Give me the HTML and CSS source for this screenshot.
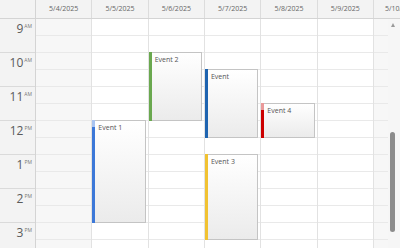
FILE: index.html
```html
<!DOCTYPE html>
<html lang="en">
<head>
    <meta charset="UTF-8">
    <title>Week Calendar</title>
    <link rel="stylesheet" href="styles.css">
</head>
<body>

    <div class="scheduler">
        <!-- column headers -->
        <div class="sched-header">
            <div class="corner"></div>
            <div class="col-headers">
                <div class="col-header">5/4/2025</div>
                <div class="col-header">5/5/2025</div>
                <div class="col-header">5/6/2025</div>
                <div class="col-header">5/7/2025</div>
                <div class="col-header">5/8/2025</div>
                <div class="col-header">5/9/2025</div>
                <div class="col-header">5/10/2025</div>
            </div>
        </div>

        <div class="sched-body">
            <!-- hours -->
            <div class="time-col">
                <div class="hour"><span class="hour-num">9</span><span class="ampm">AM</span></div>
                <div class="hour"><span class="hour-num">10</span><span class="ampm">AM</span></div>
                <div class="hour"><span class="hour-num">11</span><span class="ampm">AM</span></div>
                <div class="hour"><span class="hour-num">12</span><span class="ampm">PM</span></div>
                <div class="hour"><span class="hour-num">1</span><span class="ampm">PM</span></div>
                <div class="hour"><span class="hour-num">2</span><span class="ampm">PM</span></div>
                <div class="hour"><span class="hour-num">3</span><span class="ampm">PM</span></div>
            </div>

            <!-- day columns, events are placed by start hour (34px per hour) -->
            <div class="days">
                <div class="day weekend"></div>
                <div class="day">
                    <div class="event" style="top: 101px; height: 103px;">
                        <div class="bar bar-blue"><div class="bar-fill" style="top: 7px;"></div></div>
                        <div class="event-text">Event 1</div>
                    </div>
                </div>
                <div class="day">
                    <div class="event" style="top: 33px; height: 69px;">
                        <div class="bar bar-green"><div class="bar-fill" style="top: 0;"></div></div>
                        <div class="event-text">Event 2</div>
                    </div>
                </div>
                <div class="day">
                    <div class="event" style="top: 50px; height: 69px;">
                        <div class="bar bar-navy"><div class="bar-fill" style="top: 0;"></div></div>
                        <div class="event-text">Event</div>
                    </div>
                    <div class="event" style="top: 135px; height: 86px;">
                        <div class="bar bar-yellow"><div class="bar-fill" style="top: 0;"></div></div>
                        <div class="event-text">Event 3</div>
                    </div>
                </div>
                <div class="day">
                    <div class="event" style="top: 84px; height: 35px;">
                        <div class="bar bar-red"><div class="bar-fill" style="top: 7px;"></div></div>
                        <div class="event-text">Event 4</div>
                    </div>
                </div>
                <div class="day"></div>
                <div class="day weekend"></div>
            </div>

            <div class="scrollbar">
                <div class="scroll-arrow"></div>
                <div class="scroll-thumb"></div>
            </div>
        </div>
    </div>

</body>
</html>
```

FILE: styles.css
```css
/* General Page Styles */
body {
    margin: 0;
    padding: 0;
    background-color: #ffffff;
    font-family: "Open Sans", "Liberation Sans", sans-serif;
    color: #555;
}

.scheduler {
    width: 400px;
    height: 248px;
    overflow: hidden;
}

/* Header */
.sched-header {
    display: flex;
    height: 19px;
    background-color: #f3f3f3;
    border-bottom: 1px solid #d4d4d4;
    box-sizing: border-box;
}

.corner {
    flex: 0 0 36px;
    border-right: 1px solid #d4d4d4;
    box-sizing: border-box;
}

.col-headers {
    display: flex;
    flex: 1;
    overflow: hidden;
}

.col-header {
    flex: 0 0 56.33px;
    border-right: 1px solid #dcdcdc;
    box-sizing: border-box;
    font-size: 7px;
    line-height: 18px;
    text-align: center;
    color: #666;
    white-space: nowrap;
}

/* Body */
.sched-body {
    display: flex;
    height: 229px;
    overflow: hidden;
}

.time-col {
    flex: 0 0 36px;
    background-color: #f3f3f3;
    border-right: 1px solid #d4d4d4;
    box-sizing: border-box;
}

.hour {
    height: 34px;
    border-bottom: 1px solid #dadada;
    box-sizing: border-box;
    display: flex;
    justify-content: flex-end;
    align-items: flex-start;
    padding: 3px 3px 0 0;
}

.hour-num {
    font-size: 12px;
    line-height: 14px;
    color: #5a5a5a;
}

.ampm {
    font-size: 5px;
    line-height: 8px;
    margin-left: 1px;
    color: #777;
}

.days {
    display: flex;
    flex: 0 0 352px;
    overflow: hidden;
}

.day {
    position: relative;
    flex: 0 0 56.33px;
    border-right: 1px solid #e2e2e2;
    box-sizing: border-box;
    background: repeating-linear-gradient(to bottom, transparent 0, transparent 16px, #e9e9e9 16px, #e9e9e9 17px);
}

.day.weekend {
    background-color: #f7f7f7;
}

/* Events */
.event {
    position: absolute;
    left: 0;
    right: 2px;
    border: 1px solid #c4c4c4;
    box-sizing: border-box;
    background: linear-gradient(to bottom, #ffffff, #ebebeb);
}

.bar {
    position: absolute;
    left: -1px;
    top: -1px;
    bottom: -1px;
    width: 3px;
}

.bar-fill {
    position: absolute;
    left: 0;
    right: 0;
    bottom: 0;
}

.bar-blue { background-color: #a9c4f0; }
.bar-blue .bar-fill { background-color: #3c78d8; }
.bar-green .bar-fill { background-color: #6aa84f; }
.bar-navy .bar-fill { background-color: #1f64b0; }
.bar-yellow .bar-fill { background-color: #f1c232; }
.bar-red { background-color: #ea9999; }
.bar-red .bar-fill { background-color: #cc0000; }

.event-text {
    font-size: 7px;
    line-height: 10px;
    padding: 2px 0 0 5px;
    color: #555;
    white-space: nowrap;
    overflow: hidden;
}

/* Scrollbar */
.scrollbar {
    position: relative;
    flex: 0 0 12px;
    background-color: #f6f6f6;
}

.scroll-arrow {
    width: 0;
    height: 0;
    margin: 4px 0 0 3px;
    border-left: 2.5px solid transparent;
    border-right: 2.5px solid transparent;
    border-bottom: 4px solid #9a9a9a;
}

.scroll-thumb {
    position: absolute;
    top: 113px;
    left: 2px;
    width: 5px;
    height: 100px;
    border-radius: 3px;
    background-color: #8c8c8c;
}
```
